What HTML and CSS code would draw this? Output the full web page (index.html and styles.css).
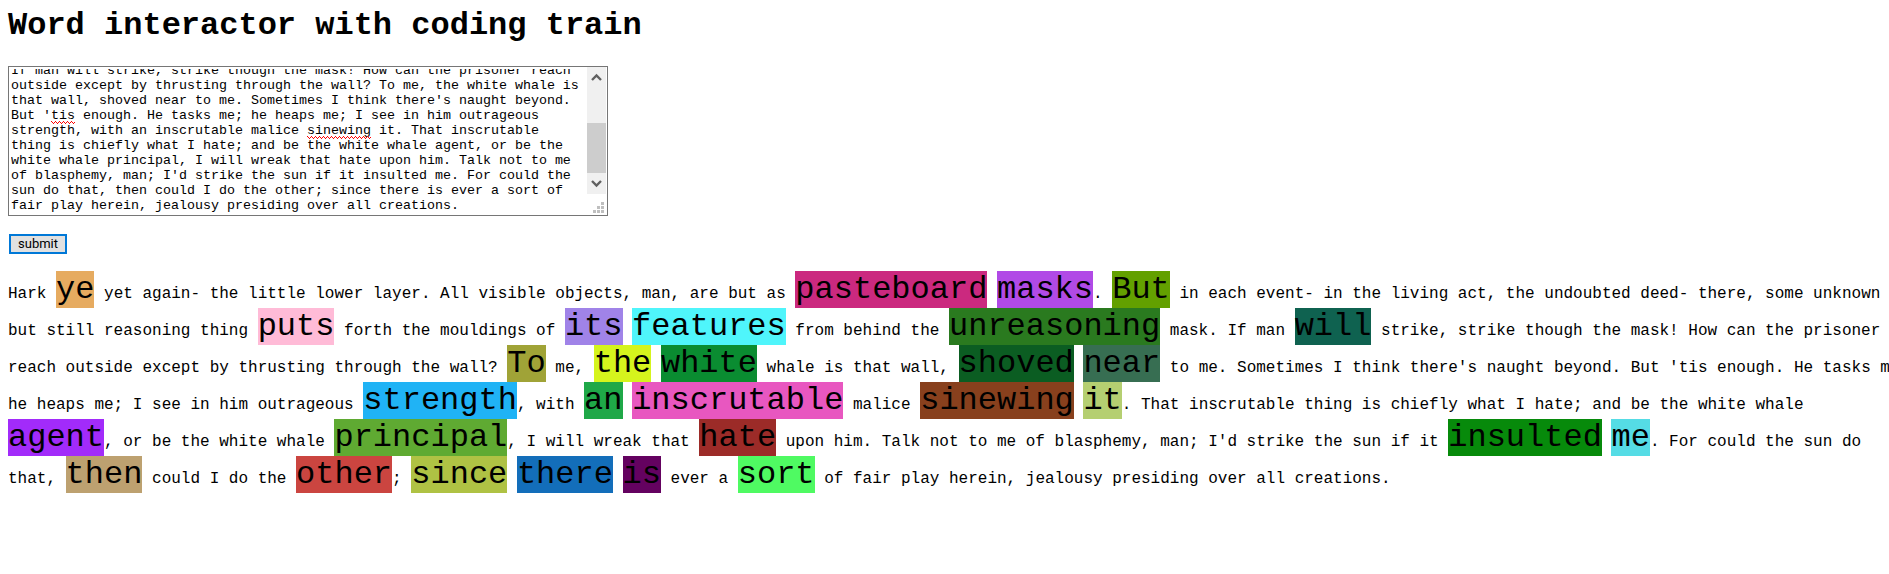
FILE: index.html
```html
<!DOCTYPE html>
<html lang="en">
<head>
<meta charset="utf-8">
<title>Word interactor with coding train</title>
<link rel="stylesheet" href="styles.css">
</head>
<body>
<main class="page">
<h1 class="title">Word interactor with coding train</h1>
<div class="field">
<textarea class="source" id="source" aria-label="Source text" spellcheck="false">Hark ye yet again- the little lower layer. All visible objects, man, are but as pasteboard masks. But in each event- in the living act, the undoubted deed- there, some unknown but still reasoning thing puts forth the mouldings of its features from behind the unreasoning mask. If man will strike, strike though the mask! How can the prisoner reach outside except by thrusting through the wall? To me, the white whale is that wall, shoved near to me. Sometimes I think there's naught beyond. But 'tis enough. He tasks me; he heaps me; I see in him outrageous strength, with an inscrutable malice sinewing it. That inscrutable thing is chiefly what I hate; and be the white whale agent, or be the white whale principal, I will wreak that hate upon him. Talk not to me of blasphemy, man; I'd strike the sun if it insulted me. For could the sun do that, then could I do the other; since there is ever a sort of fair play herein, jealousy presiding over all creations.</textarea>
<div class="bar" aria-hidden="true">
<div class="track">
<svg class="arrow" viewBox="0 0 19 20"><path d="M5 13L9.500 8.500L14 13" fill="none" stroke="#606060" stroke-width="2.400"/></svg>
<div class="thumb"></div>
<svg class="arrow" viewBox="0 0 19 20"><path d="M5 7L9.500 11.500L14 7" fill="none" stroke="#606060" stroke-width="2.400"/></svg>
</div>
<svg class="grip" viewBox="0 0 19 21"><path d="M14 8h3v3h-3zM10 12h3v3h-3zM14 12h3v3h-3zM6 16h3v3h-3zM10 16h3v3h-3zM14 16h3v3h-3z" fill="#bfbfbf"/></svg>
</div>
<span class="squiggle squiggle-tis"></span>
<span class="squiggle squiggle-sinewing"></span>
</div>
<button class="submit" type="button">submit</button>
<p class="words">Hark <span class="word ye">ye</span> yet again- the little lower layer. All visible objects, man, are but as <span class="word pasteboard">pasteboard</span> <span class="word masks">masks</span>. <span class="word but">But</span> in each event- in the living act, the undoubted deed- there, some unknown but still reasoning thing <span class="word puts">puts</span> forth the mouldings of <span class="word its">its</span> <span class="word features">features</span> from behind the <span class="word unreasoning">unreasoning</span> mask. If man <span class="word will">will</span> strike, strike though the mask! How can the prisoner reach outside except by thrusting through the wall? <span class="word to">To</span> me, <span class="word the">the</span> <span class="word white">white</span> whale is that wall, <span class="word shoved">shoved</span> <span class="word near">near</span> to me. Sometimes I think there's naught beyond. But 'tis enough. He tasks me; he heaps me; I see in him outrageous <span class="word strength">strength</span>, with <span class="word an">an</span> <span class="word inscrutable">inscrutable</span> malice <span class="word sinewing">sinewing</span> <span class="word it">it</span>. That inscrutable thing is chiefly what I hate; and be the white whale <span class="word agent">agent</span>, or be the white whale <span class="word principal">principal</span>, I will wreak that <span class="word hate">hate</span> upon him. Talk not to me of blasphemy, man; I'd strike the sun if it <span class="word insulted">insulted</span> <span class="word me">me</span>. For could the sun do that, <span class="word then">then</span> could I do the <span class="word other">other</span>; <span class="word since">since</span> <span class="word there">there</span> <span class="word is">is</span> ever a <span class="word sort">sort</span> of fair play herein, jealousy presiding over all creations.</p>
</main>
<script src="script.js"></script>
</body>
</html>
```
FILE: styles.css
```css
* { box-sizing: border-box; }

body {
  margin: 0;
  overflow-x: hidden;
  background: #fff;
  color: #000;
  font-family: "Liberation Mono", monospace;
  font-size: 16px;
}

.page { padding: 8px; }

.title {
  margin: 0 0 22px;
  font-size: 32px;
  line-height: 36px;
  font-weight: bold;
}

.field {
  position: relative;
  display: flex;
  width: 600px;
  max-width: 100%;
  height: 150px;
  border: 1px solid #767676;
}

.source {
  flex: 1;
  min-width: 0;
  margin: 2px;
  padding: 0;
  border: 0;
  outline: 0;
  resize: none;
  overflow: hidden;
  background: #fff;
  color: #000;
  font-family: "Liberation Mono", monospace;
  line-height: 15px;
}

.bar {
  display: flex;
  flex-direction: column;
  width: 20px;
  padding-right: 1px;
}

.track {
  display: flex;
  flex-direction: column;
  flex: 1;
  background: #f0f0f0;
}

.arrow { height: 20px; }

.thumb {
  height: 50px;
  margin: auto 0 1px;
  background: #cdcdcd;
}

.grip { height: 21px; }

/* Spelling marks lie over the text of the box. */
.squiggle {
  position: absolute;
  height: 3px;
  background: url("data:image/svg+xml,%3Csvg xmlns='http://www.w3.org/2000/svg' width='4' height='3'%3E%3Cpath d='M0 0h1v1H0zM1 1h1v1H1zM2 2h1v1H2zM3 1h1v1H3z' fill='%23f00'/%3E%3C/svg%3E") repeat-x;
}

.squiggle-tis { left: 42px; top: 54px; width: 24px; }
.squiggle-sinewing { left: 298px; top: 69px; width: 64px; }

.submit {
  display: block;
  min-width: 58px;
  height: 20px;
  margin: 18px 1px 17px;
  padding: 0 7px;
  border: 2px solid #0078d7;
  background: #e1e1e1;
  color: #000;
  font-family: Roboto, "Liberation Sans", sans-serif;
  font-size: 13px;
  line-height: 16px;
}

/* The paragraph runs a little past the right edge of the window. */
.words {
  margin: 0 -32px 0 0;
  line-height: 18px;
}

.word {
  font-size: 32px;
  line-height: 37px;
}

.ye { background: #e6ab60; }
.pasteboard { background: #cb297f; }
.masks { background: #b14ae6; }
.but { background: #63a000; }
.puts { background: #ffbbd7; }
.its { background: #a083e8; }
.features { background: #4ff5fb; }
.unreasoning { background: #2a7a1f; }
.will { background: #0f6250; }
.to { background: #a0a337; }
.the { background: #d5f41d; }
.white { background: #0a8c31; }
.shoved { background: #0b5d22; }
.near { background: #376e52; }
.strength { background: #20b3f5; }
.an { background: #1fa848; }
.inscrutable { background: #e857c0; }
.sinewing { background: #88401d; }
.it { background: #b5cf71; }
.agent { background: #a22bfa; }
.principal { background: #5faa32; }
.hate { background: #9c2b28; }
.insulted { background: #078a0b; }
.me { background: #55dce5; }
.then { background: #bda170; }
.other { background: #cb4540; }
.since { background: #afc244; }
.there { background: #136eba; }
.is { background: #640260; }
.sort { background: #4ffa62; }
```
FILE: script.js
```js
const source = document.getElementById("source");
source.scrollTop = source.scrollHeight;
```
